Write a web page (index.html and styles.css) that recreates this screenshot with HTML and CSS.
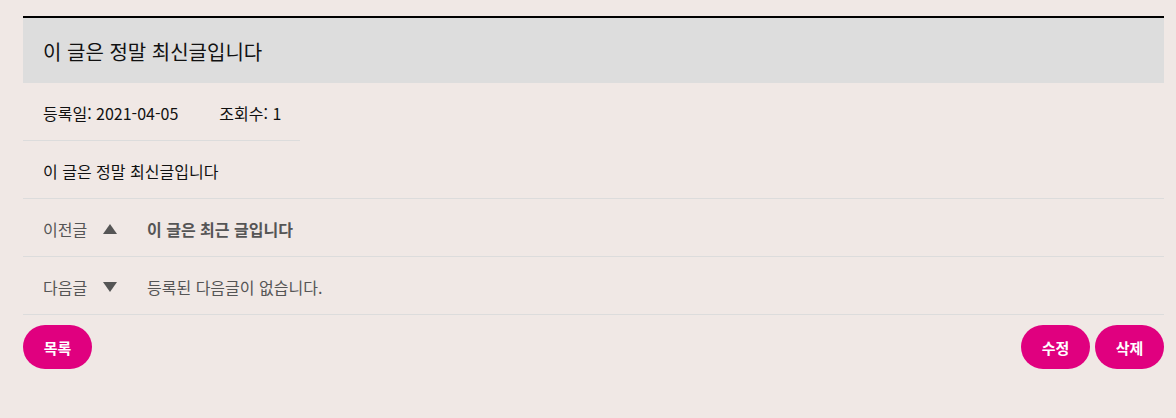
FILE: index.html
```html
<!DOCTYPE html>
<html lang="ko">
<head>
<meta charset="utf-8">
<link rel="stylesheet" href="styles.css">
</head>
<body>
<div class="board">
  <div class="title">이 글은 정말 최신글입니다</div>
  <div class="meta"><span class="date">등록일: 2021-04-05</span><span>조회수: 1</span></div>
  <div class="content">이 글은 정말 최신글입니다</div>
  <div class="nav">
    <span class="label">이전글</span>
    <svg class="tri" width="14" height="12" viewBox="0 0 14 12"><path d="M7 1 L14 11 L0 11 Z" fill="#555"/></svg>
    <span class="link bold">이 글은 최근 글입니다</span>
  </div>
  <div class="nav">
    <span class="label">다음글</span>
    <svg class="tri" width="14" height="12" viewBox="0 0 14 12"><path d="M0 1 L14 1 L7 11 Z" fill="#555"/></svg>
    <span class="link">등록된 다음글이 없습니다.</span>
  </div>
  <div class="buttons">
    <button class="btn">목록</button>
    <div class="right">
      <button class="btn">수정</button>
      <button class="btn">삭제</button>
    </div>
  </div>
</div>
</body>
</html>
```

FILE: styles.css
```css
html, body {
  margin: 0;
  padding: 0;
  background: #f0e8e5;
}
body {
  font-family: "Noto Sans CJK KR", "Noto Sans", sans-serif;
  color: #111;
  padding: 16px 12px 0 23px;
}
.board {
  width: 1141px;
}
.title {
  border-top: 2px solid #000;
  background: #dddddd;
  height: 63px;
  padding-top: 2px;
  display: flex;
  align-items: center;
  padding-left: 20px;
  font-size: 20px;
  color: #111;
}
.meta {
  width: 257px;
  height: 55px;
  padding-top: 2px;
  padding-left: 20px;
  display: flex;
  align-items: center;
  border-bottom: 1px solid #dcdcdc;
  font-size: 16px;
}
.meta .date {
  margin-right: 41px;
}
.content {
  height: 55px;
  padding-top: 2px;
  padding-left: 20px;
  display: flex;
  align-items: center;
  border-bottom: 1px solid #dcdcdc;
  font-size: 16px;
}
.nav {
  height: 55px;
  padding-top: 2px;
  padding-left: 20px;
  display: flex;
  align-items: center;
  border-bottom: 1px solid #dcdcdc;
  font-size: 16px;
  color: #555;
}
.nav .label {
  width: 60px;
}
.nav .tri {
  margin-right: 30px;
}
.nav .bold {
  font-weight: bold;
}
.buttons {
  display: flex;
  justify-content: space-between;
  margin-top: 10px;
}
.right {
  display: flex;
  gap: 5px;
}
.btn {
  height: 44px;
  width: 69px;
  border: none;
  border-radius: 22px;
  background: #e0007f;
  color: #fff;
  font-family: "Noto Sans CJK KR", sans-serif;
  font-weight: bold;
  font-size: 15px;
  padding: 0;
}
```
